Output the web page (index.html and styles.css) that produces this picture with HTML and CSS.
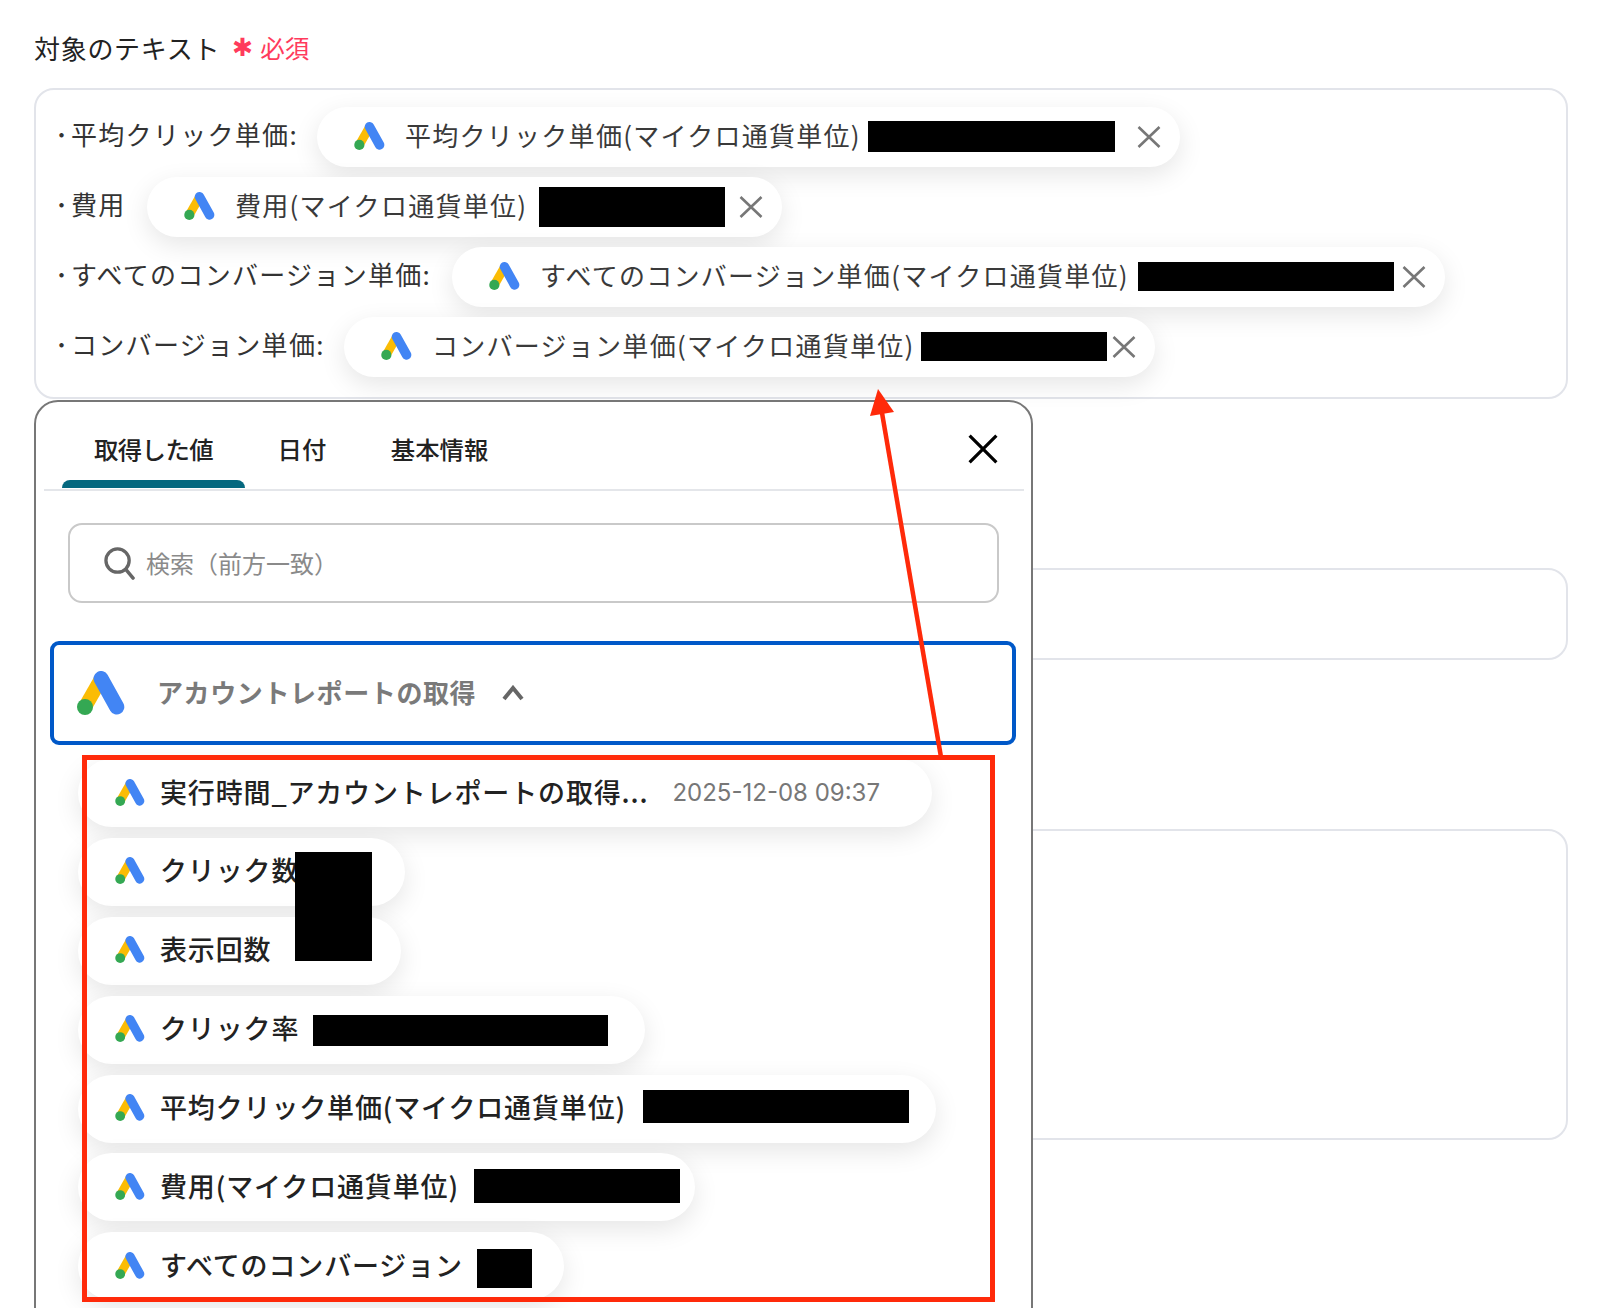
FILE: index.html
```html
<!DOCTYPE html>
<html lang="ja">
<head>
<meta charset="utf-8">
<title>対象のテキスト</title>
<link rel="stylesheet" href="styles.css">
</head>
<body>
<svg width="0" height="0" class="defs">
  <symbol id="ads" viewBox="0 0 48 44">
    <path d="M24 8 8 36" stroke="#fbbc04" stroke-width="14" fill="none"/>
    <path d="M24 7.5 39.8 36" stroke="#4285f4" stroke-width="15" stroke-linecap="round" fill="none"/>
    <circle cx="8" cy="36" r="8" fill="#34a853"/>
  </symbol>
  <symbol id="x" viewBox="0 0 24 22">
    <path d="M1.5 1 22.5 21M22.5 1 1.5 21" stroke="#777" stroke-width="2.6" fill="none"/>
  </symbol>
</svg>
<main class="page">
  <div class="heading">
    <span class="heading-text">対象のテキスト</span>
    <span class="asterisk">✱</span>
    <span class="required">必須</span>
  </div>
  <section class="field field-text">
    <div class="row">
      <span class="label l1"><span class="dot">･</span>平均クリック単価:</span>
      <div class="chip c1">
        <svg class="chip-icon"><use href="#ads"/></svg>
        <span class="chip-text">平均クリック単価(マイクロ通貨単位)</span>
        <i class="mask m1"></i>
        <svg class="chip-x x1"><use href="#x"/></svg>
      </div>
    </div>
    <div class="row">
      <span class="label l2"><span class="dot">･</span>費用</span>
      <div class="chip c2">
        <svg class="chip-icon"><use href="#ads"/></svg>
        <span class="chip-text">費用(マイクロ通貨単位)</span>
        <i class="mask m2"></i>
        <svg class="chip-x x2"><use href="#x"/></svg>
      </div>
    </div>
    <div class="row">
      <span class="label l3"><span class="dot">･</span>すべてのコンバージョン単価:</span>
      <div class="chip c3">
        <svg class="chip-icon"><use href="#ads"/></svg>
        <span class="chip-text">すべてのコンバージョン単価(マイクロ通貨単位)</span>
        <i class="mask m3"></i>
        <svg class="chip-x x3"><use href="#x"/></svg>
      </div>
    </div>
    <div class="row">
      <span class="label l4"><span class="dot">･</span>コンバージョン単価:</span>
      <div class="chip c4">
        <svg class="chip-icon"><use href="#ads"/></svg>
        <span class="chip-text">コンバージョン単価(マイクロ通貨単位)</span>
        <i class="mask m4"></i>
        <svg class="chip-x x4"><use href="#x"/></svg>
      </div>
    </div>
  </section>
  <section class="field field-small"></section>
  <section class="field field-large"></section>
</main>

<aside class="popup">
  <div class="tabs-row">
    <div class="tabs">
      <div class="tab active"><span class="tab-label">取得した値</span><i class="tab-bar"></i></div>
      <div class="tab"><span class="tab-label">日付</span></div>
      <div class="tab"><span class="tab-label">基本情報</span></div>
    </div>
    <svg class="close" viewBox="0 0 28 28"><path d="M1.5 1.5 26.5 26.5M26.5 1.5 1.5 26.5" stroke="#000" stroke-width="3" fill="none"/></svg>
  </div>
  <div class="search">
    <svg class="search-icon" viewBox="0 0 32 34"><circle cx="14" cy="14" r="12" stroke="#666" stroke-width="3.4" fill="none"/><path d="M22.5 23 30 32" stroke="#666" stroke-width="3.6" stroke-linecap="round"/></svg>
    <span class="search-text">検索（前方一致）</span>
  </div>
  <div class="group">
    <svg class="group-icon"><use href="#ads"/></svg>
    <span class="group-text">アカウントレポートの取得</span>
    <svg class="chevron" viewBox="0 0 22 16"><path d="M2 14 11 3 20 14" stroke="#666" stroke-width="4" fill="none"/></svg>
  </div>
  <div class="list">
    <div class="item i1">
      <svg class="item-icon"><use href="#ads"/></svg>
      <span class="item-text">実行時間_アカウントレポートの取得...</span>
      <span class="date">2025-12-08 09:37</span>
    </div>
    <div class="item i2">
      <svg class="item-icon"><use href="#ads"/></svg>
      <span class="item-text">クリック数</span>
    </div>
    <div class="item i3">
      <svg class="item-icon"><use href="#ads"/></svg>
      <span class="item-text">表示回数</span>
    </div>
    <div class="item i4">
      <svg class="item-icon"><use href="#ads"/></svg>
      <span class="item-text">クリック率</span>
      <i class="mask n4"></i>
    </div>
    <div class="item i5">
      <svg class="item-icon"><use href="#ads"/></svg>
      <span class="item-text">平均クリック単価(マイクロ通貨単位)</span>
      <i class="mask n5"></i>
    </div>
    <div class="item i6">
      <svg class="item-icon"><use href="#ads"/></svg>
      <span class="item-text">費用(マイクロ通貨単位)</span>
      <i class="mask n6"></i>
    </div>
    <div class="item i7">
      <svg class="item-icon"><use href="#ads"/></svg>
      <span class="item-text">すべてのコンバージョン</span>
      <i class="mask n7"></i>
    </div>
    <i class="mask span-mask"></i>
  </div>
</aside>

<div class="red-frame"></div>
<svg class="arrow" viewBox="0 0 1600 1308">
  <path d="M941 757 881.5 410" stroke="#ff2a0a" stroke-width="4.5" fill="none"/>
  <path d="M878 389 894 412 870 416Z" fill="#ff2a0a"/>
</svg>
</body>
</html>
```
FILE: styles.css
```css
* { box-sizing: border-box; }
html, body { margin: 0; padding: 0; height: 1308px; overflow: hidden; background: #fff; }
body {
  position: relative;
  font-family: "Noto Sans CJK JP", "Noto Sans", sans-serif;
  color: #333;
}
.defs { position: absolute; }
i { display: block; }

.page { padding: 29px 32px 0 34px; }
.heading { display: flex; align-items: center; height: 38px; font-size: 26px; color: #222; line-height: 38px; margin-bottom: 21px; }
.heading-text { letter-spacing: .7px; }
.asterisk { font-family: "DejaVu Sans", sans-serif; font-size: 25px; color: #ff3b5c; margin-left: 12px; width: 26px; line-height: 38px; }
.required { font-size: 24.5px; color: #ff3b5c; margin-left: 2px; letter-spacing: .2px; }

.field { border: 2px solid #e2e4ea; border-radius: 20px; background: #fff; }
.field-text { height: 311px; padding: 17px 0 0 12px; display: flex; flex-direction: column; gap: 10px; }
.field-small { height: 92px; margin-top: 169px; }
.field-large { height: 311px; margin-top: 169px; }

.row { display: flex; align-items: center; height: 60px; }
.label { font-size: 26px; color: #333; line-height: 36px; white-space: nowrap; position: relative; top: -3px; flex: none; letter-spacing: 1.3px; }
.dot { margin: 0 3px 0 7px; letter-spacing: 0; }
.l1 { width: 269px; }
.l2 { width: 99px; }
.l3 { width: 404px; }
.l4 { width: 296px; }

.chip {
  display: flex; align-items: center; height: 60px; padding: 0 19px 0 37px;
  border-radius: 30px; background: #fff; box-shadow: 0 8px 26px rgba(0,0,0,.1); flex: none;
}
.c1 { width: 863px; }
.c2 { width: 635px; }
.c3 { width: 993px; }
.c4 { width: 811px; }
.chip-icon { width: 31px; height: 28px; flex: none; margin: 0 20px 2px 0; }
.chip-text { font-size: 26px; letter-spacing: 1.27px; color: #3a3a3a; white-space: nowrap; flex: 1 1 auto; padding-bottom: 5px; }
.chip-x { width: 24px; height: 22px; flex: none; }

.mask { background: #000; flex: none; }
.m1 { width: 247px; height: 31px; margin: 0 22px 2px 0; }
.m2 { width: 186px; height: 40px; margin-right: 14px; }
.m3 { width: 256px; height: 29px; margin: 0 8px 2px 0; }
.m4 { width: 186px; height: 29px; margin: 0 5px 2px 0; }

.popup {
  position: absolute; left: 34px; top: 400px; width: 999px; height: 960px;
  border: 2px solid #777; border-radius: 24px; background: #fff;
}
.tabs-row { display: flex; justify-content: space-between; align-items: flex-start; margin: 0 7px 0 8px; border-bottom: 2px solid #e4e6ea; height: 89px; padding-left: 18px; }
.tabs { display: flex; gap: .5px; }
.tab { font-size: 24.4px; font-weight: 500; color: #222; padding: 0 32px; position: relative; height: 86px; }
.tab.active { width: 183px; padding: 0; text-align: center; letter-spacing: -.6px; }
.tab-label { display: block; line-height: 30px; padding-top: 32px; white-space: nowrap; }
.tab-bar { position: absolute; left: 0; right: 0; bottom: 0; height: 8px; background: #05687f; border-radius: 8px 8px 0 0; }
.close { width: 30px; height: 30px; margin: 32px 26px 0 0; }

.search {
  display: flex; align-items: center; width: 931px; height: 80px; margin: 32px 0 0 32px;
  border: 2px solid #c9c9c9; border-radius: 14px; padding-left: 34px;
}
.search-icon { width: 31px; height: 33px; flex: none; }
.search-text { font-size: 24px; color: #8a8a8a; margin-left: 11px; white-space: nowrap; padding-bottom: 2px; }

.group {
  display: flex; align-items: center; width: 966px; height: 104px; margin: 38px 0 0 14px;
  border: 4px solid #0058c8; border-radius: 9px; padding-left: 23px;
}
.group-icon { width: 48px; height: 44px; flex: none; margin-right: 32px; }
.group-text { font-size: 26px; font-weight: 700; color: #7a7a7a; letter-spacing: .6px; white-space: nowrap; padding-bottom: 4px; }
.chevron { width: 22px; height: 16px; margin-left: 26px; flex: none; }

.list { position: relative; margin: 14px 0 0 42px; display: flex; flex-direction: column; gap: 10.9px; }
.item {
  display: flex; align-items: center; height: 68px; padding-left: 37px; border-radius: 34px;
  background: #fff; box-shadow: 0 8px 26px rgba(0,0,0,.1);
}
.item-icon { width: 30px; height: 27px; flex: none; margin: 0 15px 2px 0; }
.item-text { font-size: 27px; font-weight: 500; color: #222; letter-spacing: .85px; white-space: nowrap; flex: 1 1 auto; padding-bottom: 4px; }
.date { font-family: Inter, "Liberation Sans", sans-serif; font-size: 24px; color: #777; margin: 0 52px 2px 0; white-space: nowrap; flex: none; }
.i1 { width: 854px; }
.i2 { width: 327px; }
.i3 { width: 323px; }
.i4 { width: 567px; }
.i5 { width: 858px; }
.i6 { width: 617px; }
.i7 { width: 486px; }
.n4 { width: 295px; height: 31px; margin: 1px 37px 0 0; }
.n5 { width: 266px; height: 33px; margin: 0 27px 5px 0; }
.n6 { width: 206px; height: 34px; margin: 0 15px 2px 0; }
.n7 { width: 55px; height: 39px; margin: 4px 32px 0 0; }
.span-mask { position: absolute; left: 217px; top: 93px; width: 77px; height: 109px; }

.red-frame { position: absolute; left: 82px; top: 755px; width: 913px; height: 547px; border: 5px solid #ff2a0a; }
.arrow { position: absolute; left: 0; top: 0; width: 1600px; height: 1308px; pointer-events: none; }
```
